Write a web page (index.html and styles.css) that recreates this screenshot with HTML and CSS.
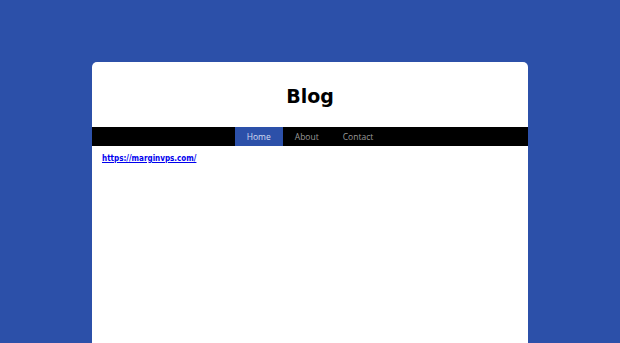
FILE: index.html
```html
<!DOCTYPE html>
<html>
<head>
<meta charset="utf-8">
<link rel="stylesheet" href="styles.css">
</head>
<body>
<div class="card">
  <header class="header"><h1 class="title">Blog</h1></header>
  <nav class="nav">
    <a class="nav-item active" href="#">Home</a>
    <a class="nav-item" href="#">About</a>
    <a class="nav-item" href="#">Contact</a>
  </nav>
  <main class="content">
    <a class="link" href="#">https://marginvps.com/</a>
  </main>
</div>
</body>
</html>
```
FILE: styles.css
```css
html, body { margin: 0; padding: 0; }
body {
  background: #2c50a9;
  height: 343px;
  overflow: hidden;
  font-family: "DejaVu Sans", Verdana, sans-serif;
}
.card {
  width: 436px;
  margin: 62px auto 0;
  background: #fff;
  border-radius: 5px 5px 0 0;
  height: 281px;
}
.header {
  height: 65px;
  display: flex;
  align-items: center;
  justify-content: center;
}
.title {
  margin: 0;
  font-size: 19px;
  font-weight: bold;
  color: #000;
  padding-top: 2px;
}
.nav {
  background: #000;
  height: 19px;
  display: flex;
  justify-content: center;
}
.nav-item {
  display: flex;
  align-items: center;
  padding: 0 12px;
  font-family: "Open Sans", sans-serif;
  font-size: 8.5px;
  color: #9a9a9a;
  text-decoration: none;
}
.nav-item.active {
  background: #2c50a9;
  color: #d4dcf2;
}
.content {
  padding: 8px 10px;
  font-size: 8px;
  line-height: 10px;
}
.link {
  font-family: "DejaVu Sans Condensed", "DejaVu Sans", sans-serif;
  font-weight: bold;
  font-stretch: condensed;
  font-size: 8px;
  color: #0000ee;
}
```
